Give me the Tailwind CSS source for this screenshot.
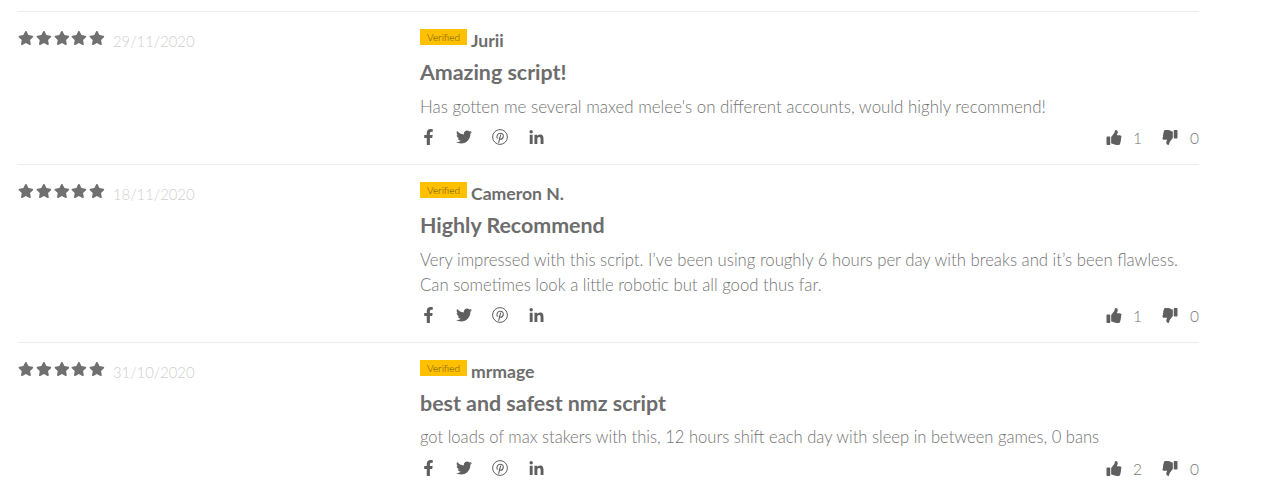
<!DOCTYPE html>
<html lang="en">
<head>
    <meta charset="UTF-8">
    <title>Reviews</title>
    <script src="https://cdn.jsdelivr.net/npm/@tailwindcss/browser@4"></script>
</head>
<body class="bg-white font-['Lato','Noto_Sans',sans-serif] text-[#6d6d6d] overflow-hidden">

    <svg class="hidden">
        <symbol id="star" viewBox="0 0 576 512"><path fill="currentColor" d="M259.3 17.8L194 150.2 47.9 171.5c-26.2 3.8-36.7 36.1-17.7 54.6l105.7 103-25 145.5c-4.5 26.3 23.2 46 46.4 33.7L288 439.6l130.7 68.7c23.2 12.2 50.9-7.4 46.4-33.7l-25-145.5 105.7-103c19-18.5 8.5-50.8-17.7-54.6L382 150.2 316.7 17.8c-11.7-23.6-45.6-24.1-57.4 0z"/></symbol>
        <symbol id="fb" viewBox="0 0 320 512"><path fill="currentColor" d="M279.14 288l14.22-92.66h-88.91v-60.13c0-25.35 12.42-50.06 52.24-50.06h40.42V6.26S260.43 0 225.36 0c-73.22 0-121.08 44.38-121.08 124.72v70.62H22.89V288h81.39v224h100.17V288z"/></symbol>
        <symbol id="tw" viewBox="0 0 512 512"><path fill="currentColor" d="M459.37 151.716c.325 4.548.325 9.097.325 13.645 0 138.72-105.583 298.558-298.558 298.558-59.452 0-114.68-17.219-161.137-47.106 8.447.974 16.568 1.299 25.34 1.299 49.055 0 94.213-16.568 130.274-44.832-46.132-.975-84.792-31.188-98.112-72.772 6.498.974 12.995 1.624 19.818 1.624 9.421 0 18.843-1.3 27.614-3.573-48.081-9.747-84.143-51.98-84.143-102.985v-1.299c13.969 7.797 30.214 12.67 47.431 13.319-28.264-18.843-46.781-51.005-46.781-87.391 0-19.492 5.197-37.36 14.294-52.954 51.655 63.675 129.3 105.258 216.365 109.807-1.624-7.797-2.599-15.918-2.599-24.04 0-57.828 46.782-104.934 104.934-104.934 30.213 0 57.502 12.67 76.67 33.137 23.715-4.548 46.456-13.32 66.599-25.34-7.798 24.366-24.366 44.833-46.132 57.827 21.117-2.273 41.584-8.122 60.426-16.243-14.292 20.791-32.161 39.308-52.628 54.253z"/></symbol>
        <symbol id="pin" viewBox="0 0 24 24"><circle cx="12" cy="12" r="11.1" fill="none" stroke="currentColor" stroke-width="1.5"/><path fill="none" stroke="currentColor" stroke-width="1.6" stroke-linecap="round" stroke-linejoin="round" d="M7.9 13.8c-1.6-3.2.5-7.5 4.4-7.5 3.2 0 5 2.2 4.6 4.8-.3 2.6-2 4.3-3.9 4.3-1.1 0-2-.6-2.2-1.6M12.9 8.9l-2.8 11.2"/></symbol>
        <symbol id="in" viewBox="0 0 448 512"><path transform="translate(0 32)" fill="currentColor" d="M100.28 448H7.4V148.9h92.88zM53.79 108.1C24.09 108.1 0 83.5 0 53.8a53.79 53.79 0 0 1 107.58 0c0 29.7-24.1 54.3-53.79 54.3zM447.9 448h-92.68V302.4c0-34.7-.7-79.2-48.29-79.2-48.29 0-55.69 37.7-55.69 76.7V448h-92.78V148.9h89.08v40.8h1.3c12.4-23.5 42.69-48.3 87.88-48.3 94 0 111.28 61.9 111.28 142.3V448z"/></symbol>
        <symbol id="up" viewBox="0 0 512 512"><path fill="currentColor" d="M104 224H24c-13.255 0-24 10.745-24 24v240c0 13.255 10.745 24 24 24h80c13.255 0 24-10.745 24-24V248c0-13.255-10.745-24-24-24zM384 81.452c0 42.416-25.97 66.208-33.277 94.548h101.723c33.397 0 59.397 27.746 59.553 58.098.084 17.938-7.546 37.249-19.439 49.197l-.11.11c9.836 23.337 8.237 56.037-9.308 79.469 8.681 25.895-.069 57.704-16.382 74.757 4.298 17.598 2.244 32.575-6.148 44.632C440.202 511.587 389.616 512 346.839 512l-2.845-.001c-48.287-.017-87.806-17.598-119.56-31.725-15.957-7.099-36.821-15.887-52.651-16.178-6.54-.12-11.783-5.457-11.783-11.998v-213.77c0-3.2 1.282-6.271 3.558-8.521 39.614-39.144 56.648-80.587 89.117-113.111 14.804-14.832 20.188-37.236 25.393-58.902C282.515 39.293 291.817 0 312 0c24 0 72 8 72 81.452z"/></symbol>
    </svg>

    <div class="w-[1181px] ml-[18px] mt-[11px]">

        <!-- Review 1 -->
        <div class="flex border-t border-[#ececec] h-[153px]">
            <div class="w-[402px] flex items-start pt-[18px]">
                <div class="flex gap-[2px] text-[#707070]">
                    <svg class="w-[15.8px] h-[16px]"><use href="#star"/></svg><svg class="w-[15.8px] h-[16px]"><use href="#star"/></svg><svg class="w-[15.8px] h-[16px]"><use href="#star"/></svg><svg class="w-[15.8px] h-[16px]"><use href="#star"/></svg><svg class="w-[15.8px] h-[16px]"><use href="#star"/></svg>
                </div>
                <span class="ml-2 text-[14.8px] leading-[20px] mt-[1px] font-light text-[#cfcfcf]">29/11/2020</span>
            </div>
            <div class="flex-1 pt-[17px]">
                <div class="flex items-start h-[22px]">
                    <span class="bg-[#ffc000] w-[47px] h-[16px] text-[10px] leading-[16px] text-center font-light text-[#5c4f10]">Verified</span>
                    <span class="ml-[4px] text-[17.6px] leading-[24px] font-bold">Jurii</span>
                </div>
                <h3 class="mt-[8px] text-[21.4px] leading-[26px] font-bold">Amazing script!</h3>
                <p class="mt-[9px] text-[16.9px] leading-[25px] font-light text-[#737373]">Has gotten me several maxed melee's on different accounts, would highly recommend!</p>
                <div class="mt-[6px] flex items-center justify-between h-[24px]">
                    <div class="flex items-center text-[#5f5f5f]">
                        <svg class="w-[11px] h-[16px] ml-[3px]"><use href="#fb"/></svg>
                        <svg class="w-[16px] h-[16px] ml-[22px]"><use href="#tw"/></svg>
                        <svg class="w-[16px] h-[16px] ml-[20px]"><use href="#pin"/></svg>
                        <svg class="w-[15px] h-[16px] ml-[21px]"><use href="#in"/></svg>
                    </div>
                    <div class="flex items-center mr-[1px] text-[15.5px] font-light text-[#737373]">
                        <svg class="w-[16px] h-[15px] text-[#5f5f5f]"><use href="#up"/></svg>
                        <span class="ml-[11px] w-[8px] mt-[3px]">1</span>
                        <svg class="w-[16px] h-[15px] ml-[21px] rotate-180 text-[#5f5f5f]"><use href="#up"/></svg>
                        <span class="ml-[12px] w-[8px] mt-[3px]">0</span>
                    </div>
                </div>
            </div>
        </div>

        <!-- Review 2 -->
        <div class="flex border-t border-[#ececec] h-[178px]">
            <div class="w-[402px] flex items-start pt-[18px]">
                <div class="flex gap-[2px] text-[#707070]">
                    <svg class="w-[15.8px] h-[16px]"><use href="#star"/></svg><svg class="w-[15.8px] h-[16px]"><use href="#star"/></svg><svg class="w-[15.8px] h-[16px]"><use href="#star"/></svg><svg class="w-[15.8px] h-[16px]"><use href="#star"/></svg><svg class="w-[15.8px] h-[16px]"><use href="#star"/></svg>
                </div>
                <span class="ml-2 text-[14.8px] leading-[20px] mt-[1px] font-light text-[#cfcfcf]">18/11/2020</span>
            </div>
            <div class="flex-1 pt-[17px]">
                <div class="flex items-start h-[22px]">
                    <span class="bg-[#ffc000] w-[47px] h-[16px] text-[10px] leading-[16px] text-center font-light text-[#5c4f10]">Verified</span>
                    <span class="ml-[4px] text-[17.6px] leading-[24px] font-bold">Cameron N.</span>
                </div>
                <h3 class="mt-[8px] text-[21.4px] leading-[26px] font-bold">Highly Recommend</h3>
                <p class="mt-[9px] text-[16.73px] leading-[25px] font-light text-[#737373]">Very impressed with this script. I’ve been using roughly 6 hours per day with breaks and it’s been flawless.<br>Can sometimes look a little robotic but all good thus far.</p>
                <div class="mt-[6px] flex items-center justify-between h-[24px]">
                    <div class="flex items-center text-[#5f5f5f]">
                        <svg class="w-[11px] h-[16px] ml-[3px]"><use href="#fb"/></svg>
                        <svg class="w-[16px] h-[16px] ml-[22px]"><use href="#tw"/></svg>
                        <svg class="w-[16px] h-[16px] ml-[20px]"><use href="#pin"/></svg>
                        <svg class="w-[15px] h-[16px] ml-[21px]"><use href="#in"/></svg>
                    </div>
                    <div class="flex items-center mr-[1px] text-[15.5px] font-light text-[#737373]">
                        <svg class="w-[16px] h-[15px] text-[#5f5f5f]"><use href="#up"/></svg>
                        <span class="ml-[11px] w-[8px] mt-[3px]">1</span>
                        <svg class="w-[16px] h-[15px] ml-[21px] rotate-180 text-[#5f5f5f]"><use href="#up"/></svg>
                        <span class="ml-[12px] w-[8px] mt-[3px]">0</span>
                    </div>
                </div>
            </div>
        </div>

        <!-- Review 3 -->
        <div class="flex border-t border-[#ececec] h-[152px]">
            <div class="w-[402px] flex items-start pt-[18px]">
                <div class="flex gap-[2px] text-[#707070]">
                    <svg class="w-[15.8px] h-[16px]"><use href="#star"/></svg><svg class="w-[15.8px] h-[16px]"><use href="#star"/></svg><svg class="w-[15.8px] h-[16px]"><use href="#star"/></svg><svg class="w-[15.8px] h-[16px]"><use href="#star"/></svg><svg class="w-[15.8px] h-[16px]"><use href="#star"/></svg>
                </div>
                <span class="ml-2 text-[14.8px] leading-[20px] mt-[1px] font-light text-[#cfcfcf]">31/10/2020</span>
            </div>
            <div class="flex-1 pt-[17px]">
                <div class="flex items-start h-[22px]">
                    <span class="bg-[#ffc000] w-[47px] h-[16px] text-[10px] leading-[16px] text-center font-light text-[#5c4f10]">Verified</span>
                    <span class="ml-[4px] text-[17.6px] leading-[24px] font-bold">mrmage</span>
                </div>
                <h3 class="mt-[8px] text-[21.4px] leading-[26px] font-bold">best and safest nmz script</h3>
                <p class="mt-[9px] text-[16.6px] leading-[25px] font-light text-[#737373]">got loads of max stakers with this, 12 hours shift each day with sleep in between games, 0 bans</p>
                <div class="mt-[6px] flex items-center justify-between h-[24px]">
                    <div class="flex items-center text-[#5f5f5f]">
                        <svg class="w-[11px] h-[16px] ml-[3px]"><use href="#fb"/></svg>
                        <svg class="w-[16px] h-[16px] ml-[22px]"><use href="#tw"/></svg>
                        <svg class="w-[16px] h-[16px] ml-[20px]"><use href="#pin"/></svg>
                        <svg class="w-[15px] h-[16px] ml-[21px]"><use href="#in"/></svg>
                    </div>
                    <div class="flex items-center mr-[1px] text-[15.5px] font-light text-[#737373]">
                        <svg class="w-[16px] h-[15px] text-[#5f5f5f]"><use href="#up"/></svg>
                        <span class="ml-[11px] w-[8px] mt-[3px]">2</span>
                        <svg class="w-[16px] h-[15px] ml-[21px] rotate-180 text-[#5f5f5f]"><use href="#up"/></svg>
                        <span class="ml-[12px] w-[8px] mt-[3px]">0</span>
                    </div>
                </div>
            </div>
        </div>

    </div>

</body>
</html>
